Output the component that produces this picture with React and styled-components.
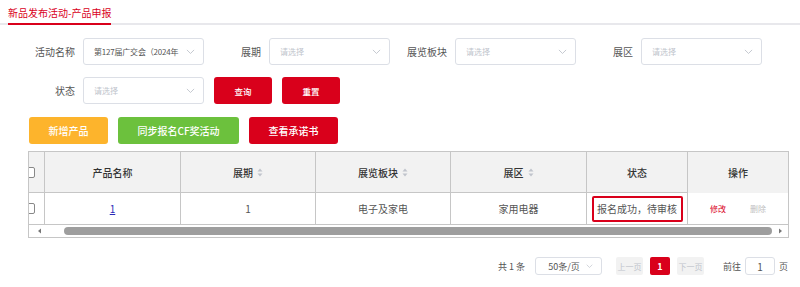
import React from 'react'
import styled, { createGlobalStyle } from 'styled-components'

const RED = '#d9001b'

const GlobalStyle = createGlobalStyle`
  html, body { margin: 0; padding: 0; background: #fff; }
  body { font-family: "Noto Sans CJK SC", "Liberation Sans", sans-serif; color: #555; }
`

const Page = styled.div`
  width: 800px;
  height: 287px;
  overflow: hidden;
  box-sizing: border-box;
`

const TabBar = styled.div`
  display: flex;
  padding: 6px 0 0 8px;
  border-bottom: 2px solid #e8e8ec;
`

const Tab = styled.div`
  font-size: 10px;
  line-height: 14px;
  color: ${RED};
  padding-bottom: 3px;
  border-bottom: 2px solid ${RED};
  margin-bottom: -2px;
`

const Form = styled.div`
  display: flex;
  flex-direction: column;
  gap: 12px;
  padding: 13px 0 0 18px;
`

const FormRow = styled.div`
  display: flex;
  align-items: center;
`

const Field = styled.div`
  display: flex;
  align-items: center;
`

const Label = styled.span`
  width: 65px;
  box-sizing: border-box;
  padding-right: 8px;
  text-align: right;
  font-size: 10px;
  color: #555;
`

const SelectBox = styled.div`
  width: ${p => p.w || 121}px;
  height: ${p => p.h || 27}px;
  margin-left: ${p => p.ml || 0}px;
  box-sizing: border-box;
  border: 1px solid #dcdfe6;
  border-radius: 3px;
  display: flex;
  align-items: center;
  padding: 0 8px 0 10px;
  gap: 4px;
  background: #fff;
`

const SelectText = styled.span`
  flex: 1;
  white-space: nowrap;
  overflow: hidden;
  font-size: ${p => p.size || 8}px;
  letter-spacing: ${p => p.tight ? '-0.2px' : '0'};
  color: ${p => (p.placeholder ? '#c0c4cc' : '#555')};
  text-align: ${p => p.align || 'left'};
`

const Btn = styled.button`
  height: 27px;
  width: ${p => p.w}px;
  margin-left: ${p => p.ml || 0}px;
  border: none;
  border-radius: 3px;
  background: ${p => p.bg};
  color: #fff;
  font-family: inherit;
  font-size: ${p => p.size || 10}px;
  font-weight: 500;
  padding: 0;
  cursor: pointer;
`

const ActionBar = styled.div`
  display: flex;
  gap: 10px;
  padding: 13px 0 0 29px;
`

const Table = styled.div`
  margin: 7px 0 0 28px;
  width: 761px;
  box-sizing: border-box;
  border: 1px solid #c6c6c6;
`

const Grid = styled.div`
  display: grid;
  grid-template-columns: 16px 136px 135px 135px 136px 101px 100px;
`

const HeadCell = styled.div`
  height: 40px;
  background: #f2f2f2;
  display: flex;
  align-items: center;
  justify-content: center;
  gap: 4px;
  font-size: 10px;
  font-weight: 500;
  color: #333;
  border-right: ${p => (p.last ? 'none' : '1px solid #c6c6c6')};
  border-bottom: ${p => (p.fixed ? '1px solid #f2f2f2' : '1px solid #c6c6c6')};
  overflow: hidden;
`

const Cell = styled.div`
  height: 31px;
  display: flex;
  align-items: center;
  justify-content: center;
  font-size: 10px;
  color: #555;
  border-right: ${p => (p.last ? 'none' : '1px solid #c6c6c6')};
  border-bottom: 1px solid #c6c6c6;
  overflow: hidden;
  gap: 24px;
`

const Check = styled.span`
  width: 11px;
  height: 11px;
  box-sizing: border-box;
  border: 1px solid #888;
  border-radius: 2px;
  background: #fff;
  margin-left: -14px;
`

const ProductLink = styled.a`
  color: #2a2ab8;
  text-decoration: underline;
  font-size: 10px;
`

const StatusBox = styled.div`
  width: 91px;
  height: 26px;
  box-sizing: border-box;
  border: 2px solid ${RED};
  border-radius: 2px;
  display: flex;
  align-items: center;
  justify-content: center;
  font-size: 10px;
  color: #555;
  white-space: nowrap;
`

const ActionLink = styled.span`
  font-size: 8px;
  color: ${p => (p.muted ? '#c0c0c0' : RED)};
`

const ScrollBar = styled.div`
  height: 12px;
  display: flex;
  align-items: center;
  padding: 0 5px 0 8px;
`

const Thumb = styled.div`
  height: 8px;
  border-radius: 4px;
  background: #9e9e9e;
  margin: 0 6px 0 22px;
  flex: 1;
`

const Pager = styled.div`
  display: flex;
  align-items: center;
  justify-content: flex-end;
  padding: 19px 12px 0 0;
  font-size: 9px;
  color: #555;
`

const PagerText = styled.span`
  margin-left: ${p => p.ml || 0}px;
`

const PageBtn = styled.span`
  width: ${p => p.w || 27}px;
  height: 18px;
  display: flex;
  align-items: center;
  justify-content: center;
  margin-left: ${p => p.ml || 0}px;
  background: ${p => (p.active ? RED : '#f2f2f2')};
  color: ${p => (p.active ? '#fff' : '#c0c4cc')};
  font-size: ${p => (p.active ? 9 : 8)}px;
  font-weight: ${p => (p.active ? 700 : 400)};
  border-radius: 2px;
`

const JumpInput = styled.span`
  width: 30px;
  height: 18px;
  box-sizing: border-box;
  border: 1px solid #dcdfe6;
  border-radius: 3px;
  display: flex;
  align-items: center;
  justify-content: center;
  margin: 0 4px;
  font-size: 10px;
  color: #555;
`

const Chevron = ({ size = 9 }) => (
  <svg width={size} height={size * 0.6} viewBox="0 0 10 6" fill="none">
    <path d="M1 1l4 4 4-4" stroke="#c0c4cc" strokeWidth="1" />
  </svg>
)

const Sort = () => (
  <svg width="6" height="9" viewBox="0 0 6 9">
    <path d="M3 0.5L5.5 3.5H0.5z" fill="#c0c4cc" />
    <path d="M3 8.5L0.5 5.5H5.5z" fill="#c0c4cc" />
  </svg>
)

const Arrow = ({ dir }) => (
  <svg width="5" height="6" viewBox="0 0 5 6">
    <path d={dir === 'left' ? 'M4 0.5L1 3l3 2.5z' : 'M1 0.5L4 3l-3 2.5z'} fill="#777" />
  </svg>
)

function Select({ value, placeholder = '请选择', size, tight }) {
  return (
    <SelectBox>
      <SelectText placeholder={!value} size={size} tight={tight}>{value || placeholder}</SelectText>
      <Chevron />
    </SelectBox>
  )
}

export default function App() {
  return (
    <Page>
      <GlobalStyle />
      <TabBar>
        <Tab>新品发布活动-产品申报</Tab>
      </TabBar>

      <Form>
        <FormRow>
          <Field>
            <Label>活动名称</Label>
            <Select value="第127届广交会（2024年" size={8} tight />
          </Field>
          <Field>
            <Label>展期</Label>
            <Select />
          </Field>
          <Field>
            <Label>展览板块</Label>
            <Select />
          </Field>
          <Field>
            <Label>展区</Label>
            <Select />
          </Field>
        </FormRow>
        <FormRow>
          <Field>
            <Label>状态</Label>
            <Select />
          </Field>
          <Btn bg={RED} w={58} ml={10} size={8.5}>查询</Btn>
          <Btn bg={RED} w={58} ml={10} size={8.5}>重置</Btn>
        </FormRow>
      </Form>

      <ActionBar>
        <Btn bg="#fdb42c" w={79}>新增产品</Btn>
        <Btn bg="#6cc13d" w={121}>同步报名CF奖活动</Btn>
        <Btn bg={RED} w={89}>查看承诺书</Btn>
      </ActionBar>

      <Table>
        <Grid>
          <HeadCell><Check /></HeadCell>
          <HeadCell>产品名称</HeadCell>
          <HeadCell>展期 <Sort /></HeadCell>
          <HeadCell>展览板块 <Sort /></HeadCell>
          <HeadCell>展区 <Sort /></HeadCell>
          <HeadCell>状态</HeadCell>
          <HeadCell last fixed>操作</HeadCell>

          <Cell><Check /></Cell>
          <Cell><ProductLink>1</ProductLink></Cell>
          <Cell>1</Cell>
          <Cell>电子及家电</Cell>
          <Cell>家用电器</Cell>
          <Cell><StatusBox>报名成功，待审核</StatusBox></Cell>
          <Cell last>
            <ActionLink>修改</ActionLink>
            <ActionLink muted>删除</ActionLink>
          </Cell>
        </Grid>
        <ScrollBar>
          <Arrow dir="left" />
          <Thumb />
          <Arrow dir="right" />
        </ScrollBar>
      </Table>

      <Pager>
        <PagerText>共 1 条</PagerText>
        <SelectBox w={67} h={18} ml={10}>
          <SelectText size={9} align="center">50条/页</SelectText>
          <Chevron size={7} />
        </SelectBox>
        <PageBtn ml={14}>上一页</PageBtn>
        <PageBtn ml={7} w={20} active>1</PageBtn>
        <PageBtn ml={7}>下一页</PageBtn>
        <PagerText ml={19}>前往</PagerText>
        <JumpInput>1</JumpInput>
        <PagerText>页</PagerText>
      </Pager>
    </Page>
  )
}
